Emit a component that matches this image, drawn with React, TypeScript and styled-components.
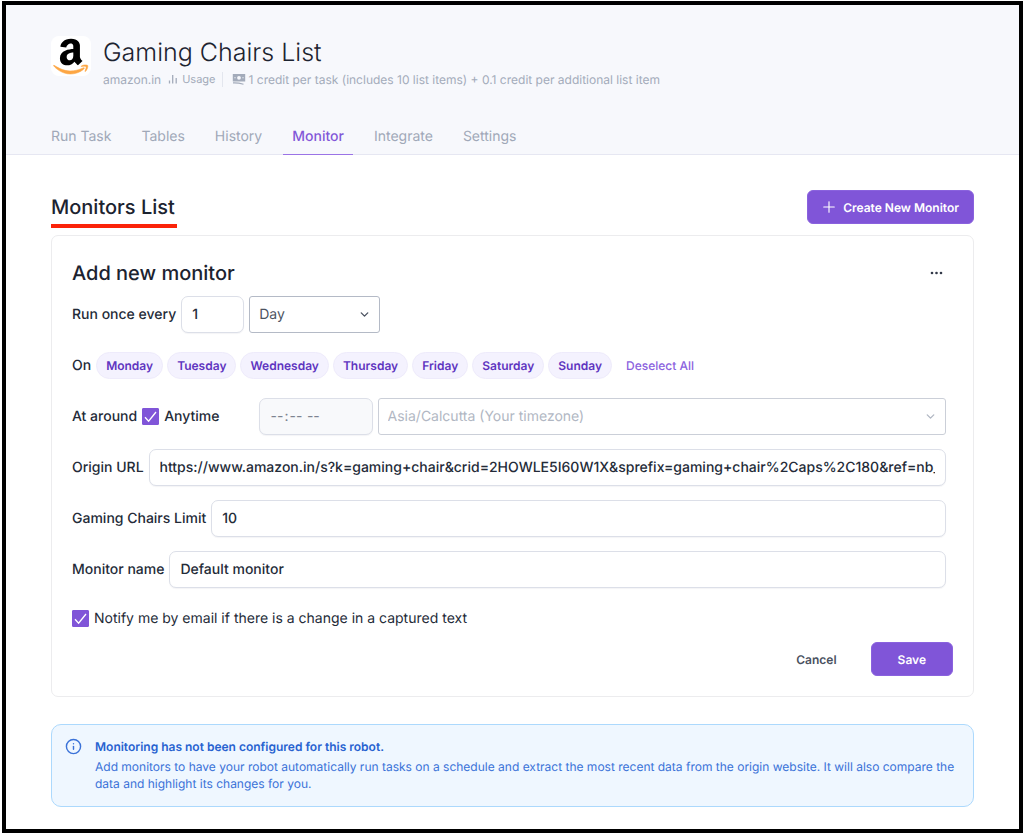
import React from "react";
import styled, { createGlobalStyle } from "styled-components";
import { ChevronDown, Info, Plus } from "lucide-react";

const GlobalStyle = createGlobalStyle`
  * { box-sizing: border-box; }
  body { margin: 0; background: #fff; text-rendering: geometricPrecision; }
  body, button, input, select {
    font-family: Inter, "Liberation Sans", sans-serif;
    font-size: 14px;
    color: #242b38;
  }
  button, input, select { text-rendering: inherit; }
  h1, h2, h3, p { margin: 0; }
`;

const Frame = styled.div`
  margin: 1px 1px 0 2px;
  min-height: calc(100vh - 2px);
  border: 4px solid #000;
  background: #fff;
`;

const Header = styled.header`
  padding: 31px 45px 0;
  background: #f7f8fc;
  border-bottom: 1px solid #e6e7f2;
`;

const Robot = styled.div`
  display: flex;
  gap: 12px;
`;

const Logo = styled.div`
  display: grid;
  place-items: center;
  width: 40px;
  height: 40px;
  flex: none;
  border-radius: 8px;
  background: #fff;
`;

const RobotName = styled.h1`
  font-size: 25px;
  line-height: 34px;
  font-weight: 300;
  color: #1c2330;
`;

const Meta = styled.div`
  display: flex;
  align-items: center;
  height: 18px;
  font-size: 12px;
  color: #a3abba;
`;

const UsageLink = styled.a`
  display: flex;
  align-items: center;
  gap: 4px;
  margin-left: 7px;
  padding-right: 6px;
  border-right: 1px solid #e3e6ee;
  font-size: 11px;
  line-height: 15px;
  color: inherit;
  text-decoration: none;
`;

const Credits = styled.span`
  display: flex;
  align-items: center;
  gap: 3px;
  margin-left: 9px;
`;

const Tabs = styled.nav`
  display: flex;
  gap: 12px;
  margin: 27px -9px -1px;
`;

const Tab = styled.a<{ $active?: boolean }>`
  padding: 13px 9px 8px;
  line-height: 18px;
  text-decoration: none;
  font-weight: ${(p) => (p.$active ? 500 : 400)};
  color: ${(p) => (p.$active ? "#8257d8" : "#a0a8b8")};
  border-bottom: 1px solid ${(p) => (p.$active ? "#9b73e6" : "transparent")};
`;

const Main = styled.main`
  padding: 35px 45px 22px;
`;

const SectionHead = styled.div`
  display: flex;
  justify-content: space-between;
  align-items: flex-start;
  margin-bottom: 7px;
`;

const SectionTitle = styled.h2`
  padding-right: 2px;
  border-bottom: 4px solid #fb2309;
  font-size: 20px;
  line-height: 34px;
  font-weight: 500;
  color: #1c2330;
`;

const PrimaryButton = styled.button`
  display: flex;
  align-items: center;
  gap: 5px;
  height: 34px;
  padding: 0 14px 0 12px;
  border: 1px solid #8a62de;
  border-radius: 6px;
  background: #8055d8;
  color: #fff;
  font-size: 12px;
  font-weight: 600;
`;

const SaveButton = styled(PrimaryButton)`
  padding: 0 26px;
`;

const CancelButton = styled.button`
  border: 0;
  padding: 0 8px;
  background: none;
  font-size: 12px;
  font-weight: 600;
  color: #4a5160;
`;

const Card = styled.form`
  padding: 20px;
  border: 1px solid #ececee;
  border-radius: 7px;
`;

const CardHead = styled.div`
  display: flex;
  justify-content: space-between;
  align-items: center;
  padding-right: 6px;
  margin-bottom: 6px;
`;

const CardTitle = styled.h3`
  font-size: 20px;
  line-height: 34px;
  font-weight: 500;
  color: #1c2330;
`;

const MoreButton = styled.button`
  display: grid;
  place-items: center;
  width: 20px;
  height: 20px;
  padding: 0;
  border: 0;
  background: none;
`;

const Fields = styled.div`
  display: flex;
  flex-direction: column;
  gap: 14px;
  padding-right: 7px;
`;

const Row = styled.div`
  display: flex;
  align-items: center;
  gap: 5px;
  min-height: 37px;
`;

const Label = styled.label`
  font-weight: 500;
  white-space: nowrap;
`;

const TextInput = styled.input<{ $width?: string }>`
  width: ${(p) => p.$width ?? "auto"};
  flex: ${(p) => (p.$width ? "none" : "1")};
  min-width: 0;
  height: 37px;
  padding: 0 10px;
  border: 1px solid #dcdfe8;
  border-radius: 7px;
  background: #fff;
  font-weight: 500;
  box-shadow: 0 1px 1px rgba(30, 40, 80, 0.05);
  &:disabled {
    background: #f8f9fb;
    color: #7d8390;
    font-weight: 400;
  }
  &::-webkit-calendar-picker-indicator {
    display: none;
  }
`;

const SelectWrap = styled.span<{ $width?: string; $muted?: boolean }>`
  display: grid;
  align-items: center;
  width: ${(p) => p.$width ?? "auto"};
  flex: ${(p) => (p.$width ? "none" : "1")};
  color: ${(p) => (p.$muted ? "#b1b7c3" : "#4c5361")};
  > * {
    grid-area: 1 / 1;
  }
  > svg {
    justify-self: end;
    margin-right: 9px;
    pointer-events: none;
  }
`;

const Select = styled.select`
  appearance: none;
  width: 100%;
  height: 37px;
  padding: 0 9px;
  border: 1px solid #b4bac6;
  border-radius: 3px;
  background: #fff;
  color: inherit;
  opacity: 1;
  &:disabled {
    border-color: #cbcfd8;
  }
`;

const Days = styled.div`
  display: flex;
  gap: 4px;
`;

const Day = styled.button`
  height: 27px;
  padding: 0 9px;
  border: 1px solid #eeebfb;
  border-radius: 14px;
  background: #f4f2fe;
  color: #5f35c0;
  font-size: 12px;
  font-weight: 600;
`;

const LinkButton = styled.button`
  border: 0;
  padding: 0 9px;
  background: none;
  color: #8b62de;
  font-size: 12px;
  font-weight: 500;
`;

const CheckWrap = styled.span`
  display: grid;
  place-items: center;
  flex: none;
  color: #fff;
  > * {
    grid-area: 1 / 1;
  }
  > svg {
    pointer-events: none;
  }
`;

const CheckInput = styled.input`
  appearance: none;
  width: 17px;
  height: 17px;
  margin: 0;
  border: 1px solid #8055d8;
  border-radius: 1px;
  background: #fff;
  &:checked {
    background: #8055d8;
  }
`;

const AnytimeLabel = styled(Label)`
  margin-right: 34px;
`;

const NotifyRow = styled(Row)`
  min-height: 32px;
  ${Label} {
    font-weight: 400;
  }
`;

const Actions = styled.div`
  display: flex;
  justify-content: flex-end;
  gap: 26px;
  margin-top: 8px;
`;

const Notice = styled.section`
  display: flex;
  gap: 13px;
  margin-top: 27px;
  padding: 13px 13px 14px;
  border: 1px solid #acd9fd;
  border-radius: 10px;
  background: #eff7ff;
  color: #3a72d8;
  font-size: 12px;
  line-height: 17px;
  svg {
    flex: none;
  }
`;

const NoticeTitle = styled.p`
  margin-bottom: 3px;
  font-weight: 600;
  color: #2762d0;
`;

const AmazonLogo = () => (
  <svg width="36" height="38" viewBox="0 12 456 480" aria-label="Amazon" role="img">
    <path
      fill="#000"
      d="M257.2 162.7c-48.7 1.8-169.5 15.5-169.5 117.5 0 109.5 138.3 114 183.5 43.2 6.5 10.2 35.4 37.5 45.3 46.8l56.8-56S341 288.9 341 261.4V114.3C341 89 316.5 32 228.7 32 140.7 32 94 87 94 136.3l73.5 6.8c16.3-49.5 54.2-49.5 54.2-49.5 40.7-.1 35.5 29.8 35.5 69.1zm0 86.8c0 80-84.2 68-84.2 17.2 0-47.2 50.5-56.7 84.2-57.8v40.6z"
    />
    <path
      fill="#fda643"
      stroke="#fda643"
      strokeWidth="7"
      d="M393.2 413c-7.7 10-70 67-174.5 67S34.2 408.5 9.7 379c-6.8-7.7 1-11.3 5.5-8.3C88.5 415.2 203 488.5 387.7 401c7.5-3.7 13.3 2 5.5 12zm39.8 2.2c-6.5 15.8-16 26.8-21.2 31-5.5 4.5-9.5 2.7-6.5-3.8s19.3-46.5 12.7-55c-6.5-8.3-37-4.3-48-3.2-10.8 1-13 2-14-.3-2.3-5.7 21.7-15.5 37.5-17.5 15.7-1.8 41-.8 46 5.7 3.7 5.1 0 27.1-6.5 43.1z"
    />
  </svg>
);

const UsageIcon = () => (
  <svg width="10" height="10" viewBox="0 0 10 10" aria-hidden="true">
    <path d="M1.5 6.5V9.5M4.7 1V9.5M8.2 4V9.5" stroke="currentColor" strokeWidth="1.3" fill="none" />
  </svg>
);

const CreditIcon = () => (
  <svg width="14" height="12" viewBox="0 0 14 12" aria-hidden="true">
    <path
      fill="currentColor"
      fillRule="evenodd"
      d="M.8 1H13.2V8.6H.8ZM7 2.9a1.9 1.9 0 1 0 0 3.8a1.9 1.9 0 1 0 0-3.8ZM2.4 4.3V5.3H3.6V4.3ZM10.4 4.3V5.3H11.6V4.3Z"
    />
    <path d="M1 9.9C5 9.7 8 10.2 11.5 11.2" stroke="currentColor" strokeWidth="1.1" fill="none" />
  </svg>
);

const MoreIcon = () => (
  <svg width="14" height="4" viewBox="0 0 14 4" fill="#323948" aria-hidden="true">
    <circle cx="2" cy="2" r="1.3" />
    <circle cx="6.5" cy="2" r="1.3" />
    <circle cx="11" cy="2" r="1.3" />
  </svg>
);

const CheckMark = () => (
  <svg width="17" height="17" viewBox="0 0 17 17" aria-hidden="true">
    <path d="M3 9.2L6.6 13.2L14 4" stroke="currentColor" strokeWidth="1.3" fill="none" />
  </svg>
);

const Checkbox = ({ id }: { id: string }) => (
  <CheckWrap>
    <CheckInput type="checkbox" id={id} defaultChecked />
    <CheckMark />
  </CheckWrap>
);

const tabs = ["Run Task", "Tables", "History", "Monitor", "Integrate", "Settings"];
const days = ["Monday", "Tuesday", "Wednesday", "Thursday", "Friday", "Saturday", "Sunday"];

export default function App() {
  return (
    <>
      <GlobalStyle />
      <Frame>
        <Header>
          <Robot>
            <Logo>
              <AmazonLogo />
            </Logo>
            <div>
              <RobotName>Gaming Chairs List</RobotName>
              <Meta>
                <span>amazon.in</span>
                <UsageLink href="#usage">
                  <UsageIcon />
                  Usage
                </UsageLink>
                <Credits>
                  <CreditIcon />
                  1 credit per task (includes 10 list items) + 0.1 credit per additional list item
                </Credits>
              </Meta>
            </div>
          </Robot>
          <Tabs>
            {tabs.map((t) => (
              <Tab key={t} href={`#${t}`} $active={t === "Monitor"}>
                {t}
              </Tab>
            ))}
          </Tabs>
        </Header>
        <Main>
          <SectionHead>
            <SectionTitle>Monitors List</SectionTitle>
            <PrimaryButton type="button">
              <Plus size={18} strokeWidth={1.5} />
              Create New Monitor
            </PrimaryButton>
          </SectionHead>
          <Card onSubmit={(e) => e.preventDefault()}>
            <CardHead>
              <CardTitle>Add new monitor</CardTitle>
              <MoreButton type="button" aria-label="More options">
                <MoreIcon />
              </MoreButton>
            </CardHead>
            <Fields>
              <Row>
                <Label htmlFor="every">Run once every</Label>
                <TextInput id="every" $width="63px" defaultValue="1" />
                <SelectWrap $width="131px">
                  <Select aria-label="Interval unit" defaultValue="Day">
                    <option>Hour</option>
                    <option>Day</option>
                    <option>Week</option>
                  </Select>
                  <ChevronDown size={13} strokeWidth={2.5} />
                </SelectWrap>
              </Row>
              <Row>
                <Label as="span">On</Label>
                <Days>
                  {days.map((d) => (
                    <Day key={d} type="button" aria-pressed="true">
                      {d}
                    </Day>
                  ))}
                </Days>
                <LinkButton type="button">Deselect All</LinkButton>
              </Row>
              <Row>
                <Label as="span">At around</Label>
                <Checkbox id="anytime" />
                <AnytimeLabel htmlFor="anytime">Anytime</AnytimeLabel>
                <TextInput type="time" aria-label="Time" $width="114px" disabled />
                <SelectWrap $muted>
                  <Select aria-label="Timezone" disabled>
                    <option>Asia/Calcutta (Your timezone)</option>
                  </Select>
                  <ChevronDown size={13} strokeWidth={2.5} />
                </SelectWrap>
              </Row>
              <Row>
                <Label htmlFor="origin">Origin URL</Label>
                <TextInput
                  id="origin"
                  defaultValue="https://www.amazon.in/s?k=gaming+chair&crid=2HOWLE5I60W1X&sprefix=gaming+chair%2Caps%2C180&ref=nb_sb_"
                />
              </Row>
              <Row>
                <Label htmlFor="limit">Gaming Chairs Limit</Label>
                <TextInput id="limit" defaultValue="10" />
              </Row>
              <Row>
                <Label htmlFor="name">Monitor name</Label>
                <TextInput id="name" defaultValue="Default monitor" />
              </Row>
              <NotifyRow>
                <Checkbox id="notify" />
                <Label htmlFor="notify">Notify me by email if there is a change in a captured text</Label>
              </NotifyRow>
            </Fields>
            <Actions>
              <CancelButton type="button">Cancel</CancelButton>
              <SaveButton type="submit">Save</SaveButton>
            </Actions>
          </Card>
          <Notice>
            <Info size={17} strokeWidth={2} />
            <div>
              <NoticeTitle>Monitoring has not been configured for this robot.</NoticeTitle>
              <p>
                Add monitors to have your robot automatically run tasks on a schedule and extract the most recent data
                from the origin website. It will also compare the data and highlight its changes for you.
              </p>
            </div>
          </Notice>
        </Main>
      </Frame>
    </>
  );
}
